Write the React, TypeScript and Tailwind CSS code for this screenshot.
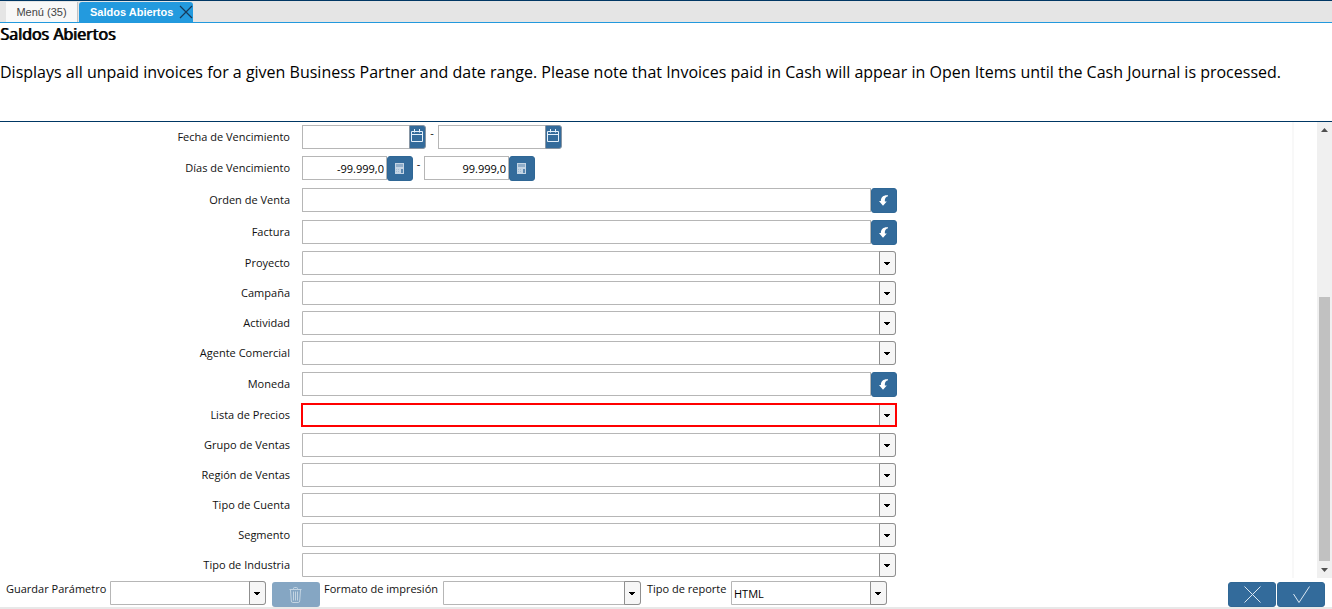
import type { ReactNode } from "react";
import clsx from "clsx";

type FieldKind = "select" | "lookup";

interface FieldDef {
  id: string;
  label: string;
  kind: FieldKind;
  required?: boolean;
}

const fields: FieldDef[] = [
  { id: "orden", label: "Orden de Venta", kind: "lookup" },
  { id: "factura", label: "Factura", kind: "lookup" },
  { id: "proyecto", label: "Proyecto", kind: "select" },
  { id: "campana", label: "Campaña", kind: "select" },
  { id: "actividad", label: "Actividad", kind: "select" },
  { id: "agente", label: "Agente Comercial", kind: "select" },
  { id: "moneda", label: "Moneda", kind: "lookup" },
  { id: "lista", label: "Lista de Precios", kind: "select", required: true },
  { id: "grupo", label: "Grupo de Ventas", kind: "select" },
  { id: "region", label: "Región de Ventas", kind: "select" },
  { id: "cuenta", label: "Tipo de Cuenta", kind: "select" },
  { id: "segmento", label: "Segmento", kind: "select" },
  { id: "industria", label: "Tipo de Industria", kind: "select" },
];

const inputClass = "h-6 min-w-0 border border-[#b6b6b6] bg-white px-[2px] text-[11px] text-black outline-none";
const blueButton = "flex h-[25px] shrink-0 items-center justify-center rounded-[3px] border border-[#2f6795] bg-[#336b9b] text-white";

function CalendarIcon() {
  return (
    <svg width="13" height="14" viewBox="0 0 13 14" fill="none" stroke="#e4f0fa" aria-hidden="true">
      <path d="M.5 2.500h11v10h-11zM0 5.500h12M3.500 0v3.500M8.500 0v3.500" />
    </svg>
  );
}

function CalculatorIcon() {
  return (
    <svg width="10" height="11" viewBox="0 0 10 11" aria-hidden="true">
      <path d="M0 0h9v11H0z" fill="#c3d4e4" />
      <path d="M1 1h7v3H1z" fill="#8fadc9" />
      <path d="M1 6h1v1H1zM3 6h1v1H3zM1 8h1v1H1zM3 8h1v1H3z" fill="#a4bdd4" />
      <path d="M6 6h2v4H6z" fill="#5b88b0" />
    </svg>
  );
}

function LookupIcon() {
  return (
    <svg width="10" height="11" viewBox="0 0 10 11" fill="#fff" aria-hidden="true">
      <path d="M9 .3C4.800-.3 1.700 2 1.900 6H0l4 4.700L7.800 6.400H5.900C5.500 3.800 6.500 2 9 1.300z" />
    </svg>
  );
}

function TrashIcon() {
  return (
    <svg width="14" height="16" viewBox="0 0 14 16" fill="none" stroke="#c3d4e2" aria-hidden="true">
      <path d="M.5 2.500h12M4.500 2V1.500q0-1 1-1h2q1 0 1 1V2M1.500 3l.8 11q.1 1.500 1.500 1.500h5.400q1.400 0 1.500-1.500l.8-11M4.500 4.500v9M6.500 4.500v9M8.500 4.500v9" />
    </svg>
  );
}

function Combo({ id, required, className, children }: { id: string; required?: boolean; className?: string; children?: ReactNode }) {
  return (
    <div className={clsx("relative h-6", required ? "-ml-px border-2 border-[#ff0000]" : "mr-px", className)}>
      <select
        id={id}
        className={clsx(
          "block size-full appearance-none rounded-r-[3px] bg-white pl-[2px] pr-5 pt-[2px] text-[11px] text-black outline-none",
          !required && "border border-[#b6b6b6]"
        )}
      >
        {children}
      </select>
      <span
        className={clsx(
          "pointer-events-none absolute inset-y-0 right-0 flex items-center justify-center border-[#8f8f8f] bg-[#f6f6f6]",
          required ? "w-4 border-l" : "w-[17px] rounded-r-[3px] border"
        )}
      >
        <svg width="7" height="4" viewBox="0 0 7 4" shapeRendering="crispEdges" aria-hidden="true">
          <path d="M0 1h6v1H0zM1 2h4v1H1zM2 3h2v1H2z" fill="#000" />
        </svg>
      </span>
    </div>
  );
}

function Row({ id, label, tall, children }: { id: string; label: string; tall?: boolean; children: ReactNode }) {
  return (
    <div
      className={clsx(
        "grid grid-cols-[290px_minmax(0,595px)] gap-x-3 last:h-7",
        tall ? "h-8 pt-1" : "h-[30px] pt-[3px]"
      )}
    >
      <label htmlFor={id} className="h-6 text-right text-[11px] leading-6">
        {label}
      </label>
      {children}
    </div>
  );
}

function DateInput({ id, label }: { id: string; label: string }) {
  return (
    <div className="flex">
      <input id={id} aria-label={label} className={clsx(inputClass, "w-[107px] border-r-0")} />
      <button
        type="button"
        aria-label={`${label}: calendario`}
        className="flex h-6 w-[17px] items-start justify-center rounded-r-[3px] border border-[#8795a3] bg-[#336b9b] pt-[3px]"
      >
        <CalendarIcon />
      </button>
    </div>
  );
}

function NumberInput({ id, label, value }: { id: string; label: string; value: string }) {
  return (
    <div className="flex">
      <input id={id} aria-label={label} defaultValue={value} className={clsx(inputClass, "w-[85px] text-right")} />
      <button type="button" aria-label={`${label}: calculadora`} className={clsx(blueButton, "w-[26px]")}>
        <CalculatorIcon />
      </button>
    </div>
  );
}

export default function App() {
  return (
    <div className="flex min-h-screen flex-col bg-white font-['Open_Sans',sans-serif] text-[#111]">
      <nav className="flex h-[23px] items-stretch border-t border-b border-t-[#003764] border-b-[#2299dd] bg-[#e5e5e5] pt-px pl-[6px] font-['Liberation_Sans',sans-serif] text-[11px]">
        <a href="#menu" className="flex w-[72px] items-center justify-center border-r border-[#c4c4c4] bg-[#f8f8f8] text-[#444]">
          Menú (35)
        </a>
        <div className="ml-px flex w-[114px] items-center justify-between rounded-t-[3px] bg-[#239ade] pl-[11px] text-white">
          <a href="#saldos" className="font-bold">
            Saldos Abiertos
          </a>
          <button type="button" aria-label="Cerrar">
            <svg width="14" height="14" viewBox="0 0 14 14" stroke="#16395a" strokeWidth="1.200" aria-hidden="true">
              <path d="M1 1l12 12M13 1L1 13" />
            </svg>
          </button>
        </div>
      </nav>

      <header className="h-[99px] border-b border-[#003764] text-base leading-[22px] text-black">
        <h1 className="[text-shadow:1px_0_0_#000]">Saldos Abiertos</h1>
        <p className="mt-4">
          Displays all unpaid invoices for a given Business Partner and date range. Please note that Invoices paid in Cash will
          appear in Open Items until the Cash Journal is processed.
        </p>
      </header>

      <main className="flex">
        <form className="min-w-0 flex-1">
          <Row id="fecha-desde" label="Fecha de Vencimiento">
            <div className="flex">
              <DateInput id="fecha-desde" label="Fecha de Vencimiento" />
              <span className="w-3 text-center text-[11px] leading-4">-</span>
              <DateInput id="fecha-hasta" label="Fecha de Vencimiento hasta" />
            </div>
          </Row>
          <Row id="dias-desde" label="Días de Vencimiento" tall>
            <div className="flex">
              <NumberInput id="dias-desde" label="Días de Vencimiento" value="-99.999,0" />
              <span className="w-[11px] text-center text-[11px] leading-4">-</span>
              <NumberInput id="dias-hasta" label="Días de Vencimiento hasta" value="99.999,0" />
            </div>
          </Row>
          {fields.map((f) => (
            <Row key={f.id} id={f.id} label={f.label} tall={f.kind === "lookup"}>
              {f.kind === "lookup" ? (
                <div className="flex">
                  <input id={f.id} className={clsx(inputClass, "flex-1")} />
                  <button type="button" aria-label={`Buscar ${f.label}`} className={clsx(blueButton, "w-[26px]")}>
                    <LookupIcon />
                  </button>
                </div>
              ) : (
                <Combo id={f.id} required={f.required} />
              )}
            </Row>
          ))}
        </form>
        <div className="mr-[23px] w-[2px] bg-[#f8f8f8]" />
        <div className="flex w-[15px] flex-col items-center justify-between bg-[#f0f0f0] pt-[6px] pb-[6px]">
          <svg width="7" height="4" viewBox="0 0 7 4" aria-hidden="true">
            <path d="M0 4L3.500 0L7 4z" fill="#505050" />
          </svg>
          <div className="mt-[165px] mb-[7px] w-[11px] flex-1 bg-[#c1c1c1]" />
          <svg width="7" height="4" viewBox="0 0 7 4" aria-hidden="true">
            <path d="M0 0L3.500 4L7 0z" fill="#505050" />
          </svg>
        </div>
      </main>

      <footer className="flex flex-1 items-start pt-[3px] pr-[7px] pl-[6px] text-[11px] leading-4">
        <label htmlFor="guardar" className="w-[100px] whitespace-nowrap">
          Guardar Parámetro
        </label>
        <Combo id="guardar" className="ml-1 w-[156px]" />
        <button
          type="button"
          aria-label="Eliminar"
          disabled
          className="mt-px ml-[5px] flex h-[25px] w-12 items-center justify-center rounded-[3px] bg-[#85a6c3]"
        >
          <TrashIcon />
        </button>
        <label htmlFor="formato" className="ml-1 w-[115px] whitespace-nowrap">
          Formato de impresión
        </label>
        <Combo id="formato" className="ml-1 w-[198px]" />
        <label htmlFor="tipo" className="ml-[5px] w-20 whitespace-nowrap">
          Tipo de reporte
        </label>
        <Combo id="tipo" className="ml-1 w-[156px]">
          <option>HTML</option>
        </Combo>
        <div className="mt-px ml-auto flex gap-px">
          <button type="button" aria-label="Cancelar" className={clsx(blueButton, "w-12")}>
            <svg width="17" height="17" viewBox="0 0 17 17" stroke="#dbe8f3" aria-hidden="true">
              <path d="M.5.5l16 16M16.500.5l-16 16" />
            </svg>
          </button>
          <button type="button" aria-label="Aceptar" className={clsx(blueButton, "w-12")}>
            <svg width="17" height="17" viewBox="0 0 17 17" fill="none" stroke="#dbe8f3" aria-hidden="true">
              <path d="M.5 8l5.500 8.500L16.500.5" />
            </svg>
          </button>
        </div>
      </footer>
      <div className="h-[2px] bg-[#e8e8e8]" />
    </div>
  );
}
